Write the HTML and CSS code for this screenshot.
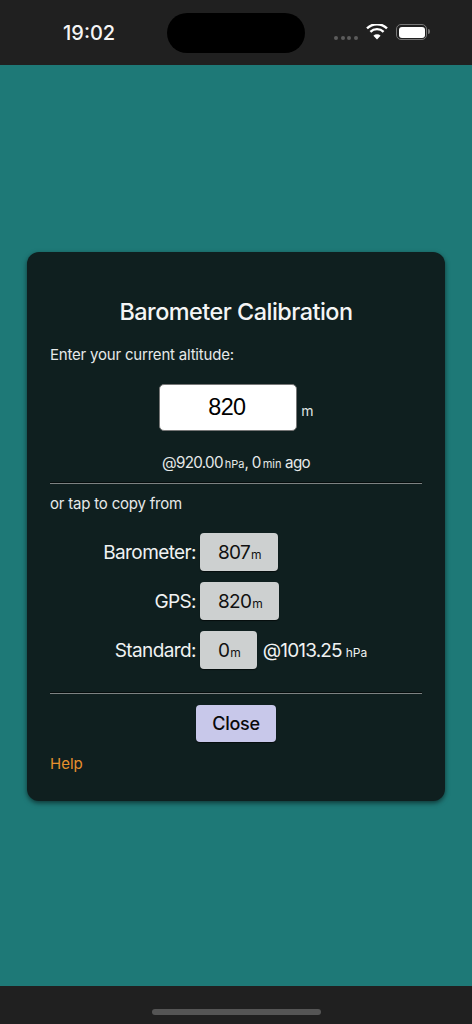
FILE: index.html
```html
<!DOCTYPE html>
<html lang="en">
<head>
    <meta charset="UTF-8">
    <meta name="viewport" content="width=device-width, initial-scale=1.0">
    <title>Barometer Calibration</title>
    <link rel="stylesheet" href="styles.css">
</head>
<body>
    <header class="status-bar">
        <span class="clock">19:02</span>
        <div class="island"></div>
        <div class="status-icons">
            <div class="signal"><i></i><i></i><i></i><i></i></div>
            <svg class="wifi" width="22" height="16" viewBox="0 0 22 16">
                <path d="M11 15.4l-3.6 -3.7a5.1 5.1 0 0 1 7.2 0z" fill="#fff"/>
                <path d="M4.4 7.9a9.3 9.3 0 0 1 13.2 0" fill="none" stroke="#fff" stroke-width="2.3"/>
                <path d="M1 4.4a14.1 14.1 0 0 1 20 0" fill="none" stroke="#fff" stroke-width="2.3"/>
            </svg>
            <div class="battery"><div class="battery-fill"></div></div>
        </div>
    </header>

    <main class="screen">
        <section class="card">
            <h1>Barometer Calibration</h1>
            <p class="prompt">Enter your current altitude:</p>

            <div class="altitude-row">
                <input class="altitude-input" type="text" value="820">
                <span class="unit">m</span>
            </div>

            <p class="reading">@920.00<small>hPa</small>, 0<small>min</small> ago</p>
            <hr>
            <p class="prompt">or tap to copy from</p>

            <div class="sources">
                <span class="source-label">Barometer:</span>
                <div class="source-value">
                    <button class="copy-btn">807<small>m</small></button>
                </div>
                <span class="source-label">GPS:</span>
                <div class="source-value">
                    <button class="copy-btn">820<small>m</small></button>
                </div>
                <span class="source-label">Standard:</span>
                <div class="source-value">
                    <button class="copy-btn">0<small>m</small></button>
                    <span class="pressure">@1013.25<small>hPa</small></span>
                </div>
            </div>

            <hr class="bottom-rule">
            <div class="actions">
                <button class="close-btn">Close</button>
            </div>
            <a class="help" href="#">Help</a>
        </section>
    </main>

    <footer class="home-bar">
        <div class="home-indicator"></div>
    </footer>
</body>
</html>
```

FILE: styles.css
```css
* { margin: 0; padding: 0; box-sizing: border-box; }
body {
    font-family: Inter, 'Noto Sans', sans-serif;
    background: #1e7977;
    color: #f0f2f2;
    width: 472px;
    height: 1024px;
    display: flex;
    flex-direction: column;
    overflow: hidden;
}
.status-bar {
    height: 65px;
    flex: none;
    background: #202020;
    position: relative;
    display: flex;
    align-items: center;
    justify-content: space-between;
    padding: 0 45px 0 63px;
}
.clock {
    font-size: 20px;
    font-weight: 500;
    color: #f5f5f5;
}
.island {
    position: absolute;
    left: 167px;
    top: 13px;
    width: 138px;
    height: 40px;
    border-radius: 20px;
    background: #000;
}
.status-icons {
    display: flex;
    align-items: center;
    gap: 8px;
}
.signal {
    display: flex;
    gap: 2.7px;
    margin-top: 11px;
}
.signal i {
    width: 4px;
    height: 4px;
    border-radius: 50%;
    background: #5c5c5c;
}
.wifi { margin-top: -1px; }
.battery {
    width: 31px;
    height: 16px;
    border: 1.5px solid #777;
    border-radius: 5px;
    padding: 1.5px;
    position: relative;
    margin-top: -1px;
}
.battery::after {
    content: "";
    position: absolute;
    right: -4px;
    top: 4px;
    width: 2px;
    height: 5px;
    border-radius: 0 2px 2px 0;
    background: #777;
}
.battery-fill {
    width: 100%;
    height: 100%;
    background: #fff;
    border-radius: 3px;
}
.screen {
    flex: 1;
    display: flex;
    align-items: center;
    padding: 2px 27px 0;
}
.card {
    width: 100%;
    height: 549px;
    background: #0f1f1f;
    border-radius: 12px;
    padding: 0 23px;
    box-shadow: 0 2px 5px rgba(0,0,0,0.55);
}
h1 {
    text-align: center;
    font-size: 23.4px;
    font-weight: 500;
    letter-spacing: -0.5px;
    line-height: 30px;
    margin-top: 45px;
    color: #f4f5f5;
}
.prompt {
    font-size: 15px;
    letter-spacing: -0.2px;
    line-height: 20px;
    color: #e6e9e9;
}
h1 + .prompt { margin-top: 18px; }
.altitude-row {
    display: flex;
    justify-content: center;
    align-items: flex-end;
    gap: 4px;
    margin-top: 19px;
    padding-left: 1px;
}
.altitude-input {
    width: 138px;
    height: 47px;
    padding-right: 3px;
    border: 1px solid #777;
    border-radius: 5px;
    background: #fff;
    color: #000;
    text-align: center;
    font-family: 'Liberation Sans', Arial, sans-serif;
    font-size: 23.4px;
    letter-spacing: -0.6px;
}
.unit {
    font-size: 14px;
    line-height: 20px;
    margin-bottom: 10px;
    color: #dfe3e3;
}
.reading {
    text-align: center;
    font-size: 15.2px;
    letter-spacing: -0.7px;
    line-height: 20px;
    margin-top: 22px;
    color: #e6e9e9;
}
small {
    font-size: 11px;
    letter-spacing: 0;
    margin-left: 2px;
}
hr {
    border: none;
    border-top: 1px solid #7d8282;
    box-shadow: 0 -1px 0 #050c0c;
    margin-top: 9px;
}
hr + .prompt { margin-top: 10px; }
.sources {
    display: grid;
    grid-template-columns: 146px 1fr;
    column-gap: 4px;
    row-gap: 11px;
    align-items: center;
    margin-top: 19px;
}
.source-label {
    text-align: right;
    font-size: 19px;
    letter-spacing: -0.6px;
    color: #f0f2f2;
}
.source-value {
    display: flex;
    align-items: center;
    gap: 6px;
}
.copy-btn {
    height: 38px;
    padding: 0 16px 0 18px;
    border: none;
    border-radius: 4px;
    background: #cdd0d0;
    color: #111;
    font-family: Inter, 'Noto Sans', sans-serif;
    font-size: 19px;
    letter-spacing: -0.7px;
    box-shadow: 0 1px 1px rgba(0,0,0,0.6);
}
.copy-btn small { font-size: 12px; margin-left: 1px; }
.pressure {
    font-size: 19px;
    letter-spacing: -0.85px;
    color: #f0f2f2;
}
.pressure small { font-size: 12px; margin-left: 4px; }
.bottom-rule { margin-top: 24px; }
.actions {
    display: flex;
    justify-content: center;
    margin-top: 11px;
}
.close-btn {
    width: 80px;
    height: 37px;
    border: none;
    border-radius: 4px;
    background: #c8c8ea;
    color: #0a0a0a;
    font-family: Inter, 'Noto Sans', sans-serif;
    font-size: 18px;
    font-weight: 500;
    letter-spacing: -0.3px;
    box-shadow: 0 1px 1px rgba(0,0,0,0.6);
}
.help {
    display: block;
    width: fit-content;
    margin-top: 12px;
    font-size: 15px;
    color: #e8912d;
    text-decoration: none;
}
.home-bar {
    height: 38px;
    flex: none;
    background: #202020;
    padding-top: 23px;
}
.home-indicator {
    width: 169px;
    height: 6px;
    margin: 0 auto;
    border-radius: 3px;
    background: #555;
}
```
